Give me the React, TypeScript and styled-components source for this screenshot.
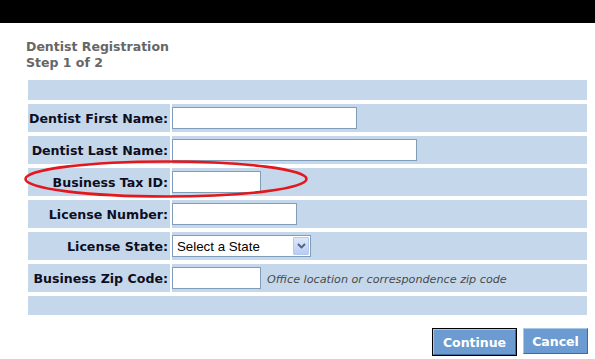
import styled, { createGlobalStyle } from "styled-components";

const GlobalStyle = createGlobalStyle`
    html, body {
        margin: 0;
        padding: 0;
        background: #ffffff;
    }
    body {
        font-family: "DejaVu Sans", Verdana, sans-serif;
    }
`;

const fields = [
    { label: "Dentist First Name:", width: 185 },
    { label: "Dentist Last Name:", width: 245 },
    { label: "Business Tax ID:", width: 89 },
    { label: "License Number:", width: 125 },
];

function App() {
    return (
        <Page>
            <GlobalStyle />
            <TopBar />
            <Content>
                <Heading>
                    Dentist Registration
                    <br />
                    Step 1 of 2
                </Heading>
                <FormArea>
                    <FormTable>
                        <tbody>
                            <tr>
                                <BlankCell colSpan={2} $height={20} />
                            </tr>
                            {fields.map((f) => (
                                <tr key={f.label}>
                                    <Label>{f.label}</Label>
                                    <Field>
                                        <TextInput type="text" $width={f.width} />
                                    </Field>
                                </tr>
                            ))}
                            <tr>
                                <Label>License State:</Label>
                                <Field>
                                    <SelectBox>
                                        <Select defaultValue="">
                                            <option value="">Select a State</option>
                                        </Select>
                                        <ArrowBox>
                                            <svg width="9" height="6" viewBox="0 0 9 6">
                                                <path d="M1 1 L4.5 4.5 L8 1" fill="none" stroke="#4d6185" strokeWidth="1.8" />
                                            </svg>
                                        </ArrowBox>
                                    </SelectBox>
                                </Field>
                            </tr>
                            <tr>
                                <Label>Business Zip Code:</Label>
                                <Field>
                                    <ZipRow>
                                        <TextInput type="text" $width={89} />
                                        <Hint>Office location or correspondence zip code</Hint>
                                    </ZipRow>
                                </Field>
                            </tr>
                            <tr>
                                <BlankCell colSpan={2} $height={19} />
                            </tr>
                        </tbody>
                    </FormTable>
                    <Circle width="290" height="44" viewBox="0 0 290 44">
                        <ellipse cx="143" cy="20" rx="140.5" ry="17.5" fill="none" stroke="#e3171c" strokeWidth="2.6" />
                    </Circle>
                </FormArea>
                <Actions>
                    <DefaultOutline>
                        <ActionButton type="button">Continue</ActionButton>
                    </DefaultOutline>
                    <ActionButton type="button" $wide={65}>Cancel</ActionButton>
                </Actions>
            </Content>
        </Page>
    );
}

const Page = styled.div`
    width: 595px;
    height: 359px;
    overflow: hidden;
`;

const TopBar = styled.div`
    height: 23px;
    background: #000000;
`;

const Content = styled.div`
    padding: 0 8px 0 28px;
`;

const Heading = styled.div`
    margin: 16px 0 0 -2px;
    font-size: 12.5px;
    line-height: 15.5px;
    font-weight: bold;
    color: #666666;
`;

const FormArea = styled.div`
    position: relative;
    margin-top: 10px;
`;

const FormTable = styled.table`
    width: 559px;
    border-collapse: separate;
    border-spacing: 0 4px;
    margin: -4px 0;
`;

const BlankCell = styled.td<{ $height: number }>`
    height: ${(p) => p.$height}px;
    padding: 0;
    background: #c5d8eb;
`;

const Label = styled.th`
    width: 140px;
    padding: 0 2px 0 0;
    border-right: 2px solid #ffffff;
    background: #c5d8eb;
    text-align: right;
    white-space: nowrap;
    font-size: 12.6px;
    font-weight: bold;
    color: #0e0e22;
    height: 28px;
`;

const Field = styled.td`
    padding: 3px 0;
    background: #c5d8eb;
    vertical-align: middle;
`;

const TextInput = styled.input<{ $width: number }>`
    display: block;
    width: ${(p) => p.$width}px;
    height: 22px;
    box-sizing: border-box;
    margin: 0;
    border: 1px solid #7f9db9;
    background: #ffffff;
    padding: 2px 3px;
    font-family: "Liberation Sans", Arial, sans-serif;
    font-size: 13px;
`;

const SelectBox = styled.div`
    display: flex;
    width: 139px;
    height: 22px;
    box-sizing: border-box;
    border: 1px solid #7f9db9;
    background: #ffffff;
    padding: 1px;
`;

const Select = styled.select`
    flex: 1;
    min-width: 0;
    appearance: none;
    border: none;
    outline: none;
    background: transparent;
    padding: 1px 0 0 3px;
    margin: 0;
    font-family: "Liberation Sans", Arial, sans-serif;
    font-size: 13.3px;
    color: #000000;
`;

const ArrowBox = styled.div`
    width: 16px;
    display: flex;
    align-items: center;
    justify-content: center;
    background: linear-gradient(#dde8fb, #b9ccf2);
    border: 1px solid #b7c8ee;
    box-sizing: border-box;
    border-radius: 1px;
`;

const ZipRow = styled.div`
    display: flex;
    align-items: center;
    gap: 6px;
`;

const Hint = styled.span`
    font-size: 11.2px;
    font-style: italic;
    color: #4a4a4a;
    margin-top: 3px;
`;

const Circle = styled.svg`
    position: absolute;
    left: -5px;
    top: 83px;
    pointer-events: none;
`;

const Actions = styled.div`
    display: flex;
    justify-content: flex-end;
    align-items: flex-start;
    gap: 6px;
    width: 560px;
    margin-top: 13px;
`;

const DefaultOutline = styled.div`
    border: 1px solid #000000;
    display: flex;
`;

const ActionButton = styled.button<{ $wide?: number }>`
    width: ${(p) => p.$wide ?? 83}px;
    height: 26px;
    box-sizing: border-box;
    margin: 0;
    padding: 0;
    background: #6b9bd0;
    border: 1px solid;
    border-color: #a9c7e8 #3f6a9c #3f6a9c #a9c7e8;
    color: #ffffff;
    font-family: "DejaVu Sans", Verdana, sans-serif;
    font-size: 12.5px;
    font-weight: bold;
    cursor: pointer;
`;

export default App;
